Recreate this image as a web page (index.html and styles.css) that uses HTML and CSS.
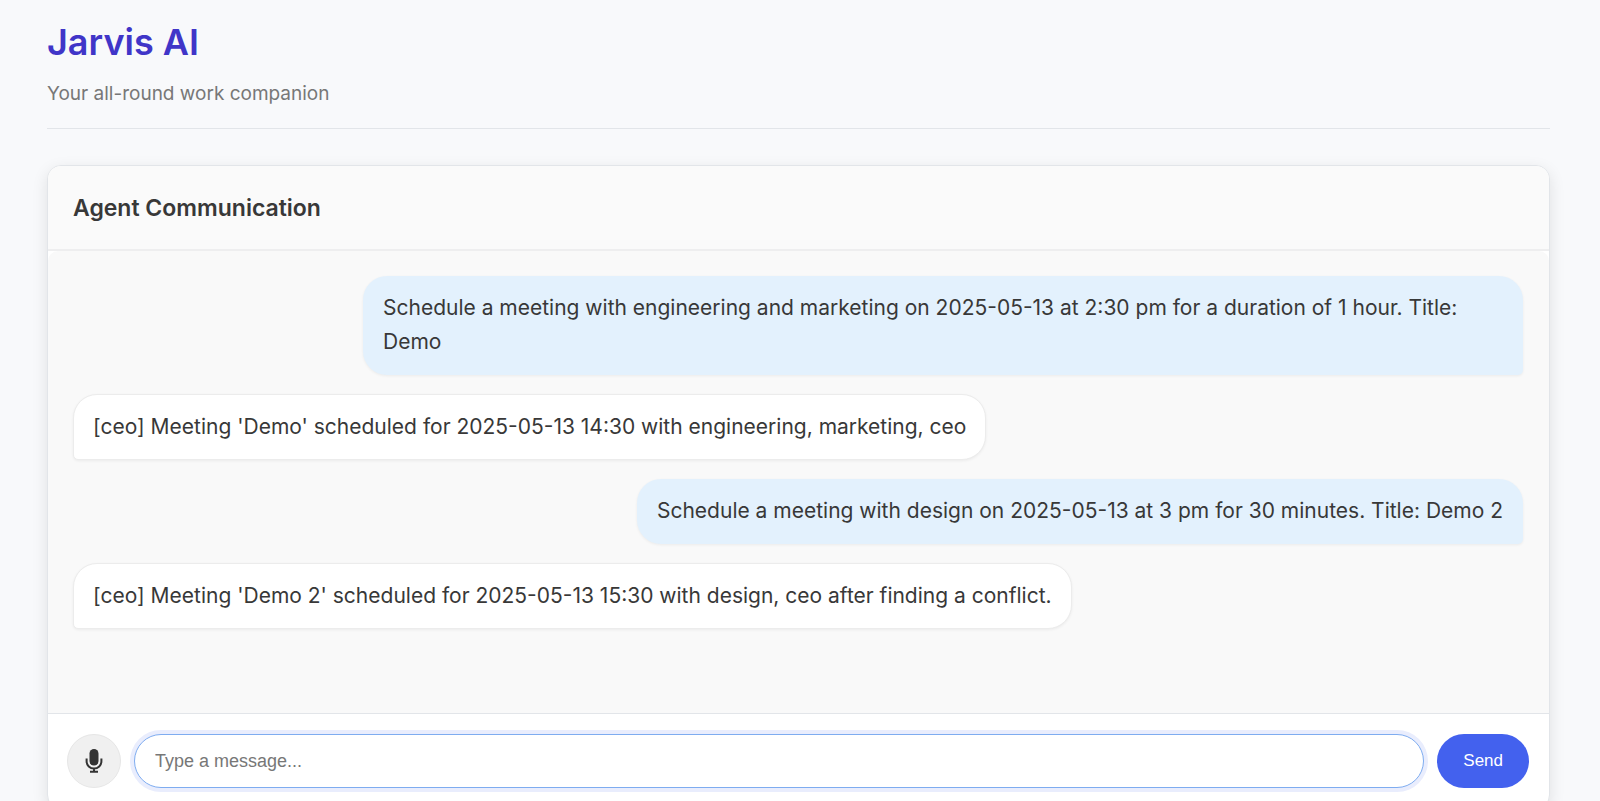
FILE: index.html
```html
<!DOCTYPE html>
<html lang="en">
<head>
<meta charset="utf-8">
<meta name="viewport" content="width=device-width, initial-scale=1">
<title>Jarvis AI</title>
<link rel="stylesheet" href="styles.css">
</head>
<body>
<div class="page">
  <header class="page-header">
    <h1 class="brand">Jarvis AI</h1>
    <p class="tagline">Your all-round work companion</p>
  </header>
  <main class="card">
    <div class="card-header">
      <h2 class="card-title">Agent Communication</h2>
    </div>
    <div class="messages">
      <div class="message message-user">Schedule a meeting with engineering and marketing on 2025-05-13 at 2:30 pm for a duration of 1 hour. Title: Demo</div>
      <div class="message message-agent">[ceo] Meeting 'Demo' scheduled for 2025-05-13 14:30 with engineering, marketing, ceo</div>
      <div class="message message-user">Schedule a meeting with design on 2025-05-13 at 3 pm for 30 minutes. Title: Demo 2</div>
      <div class="message message-agent">[ceo] Meeting 'Demo 2' scheduled for 2025-05-13 15:30 with design, ceo after finding a conflict.</div>
    </div>
    <form class="composer">
      <button class="mic" type="button" aria-label="Record voice message">
        <svg class="mic-icon" viewBox="0 0 24 24" aria-hidden="true">
          <rect x="7.5" y="0" width="9" height="16.5" rx="4.5" fill="currentColor"/>
          <path d="M4.6 9.5v2.7a7.4 7.4 0 0 0 14.8 0V9.5M12 19.6V23M8 22.8h8" fill="none" stroke="currentColor" stroke-width="2"/>
        </svg>
      </button>
      <input class="field" type="text" placeholder="Type a message..." aria-label="Message">
      <button class="send" type="submit">Send</button>
    </form>
  </main>
</div>
</body>
</html>
```

FILE: styles.css
```css
* {
  box-sizing: border-box;
}

body {
  margin: 0;
  background: #f8f9fb;
  color: #383838;
  font-family: Inter, "Liberation Sans", sans-serif;
  font-size: 21px;
  line-height: 34px;
}

.page {
  padding: 12px 50px 32px 47px;
}

.page-header {
  margin-bottom: 36px;
  padding-bottom: 17px;
  border-bottom: 1px solid #e2e5e9;
}

.brand {
  margin: 0;
  color: #4035c8;
  font-size: 36px;
  font-weight: 600;
  line-height: 60px;
}

.tagline {
  margin: 5px 0 0;
  color: #777;
  font-size: 19px;
}

.card {
  overflow: hidden;
  border: 1px solid #e2e5e9;
  border-radius: 14px;
  background: #fff;
  box-shadow: 0 5px 16px rgba(0, 0, 0, 0.1);
}

.card-header {
  padding: 25px 25px 24px;
  border-bottom: 2px solid #eeeeef;
  background: #fafafa;
}

.card-title {
  margin: 0;
  font-size: 23px;
  font-weight: 600;
}

.messages {
  display: flex;
  flex-direction: column;
  gap: 19px;
  min-height: 462px;
  padding: 25px 26px 25px 25px;
  border-radius: 10px 10px 0 0;
  background: #f9f9f9;
}

.message {
  max-width: 80%;
  border-radius: 24px;
  box-shadow: 0 1px 3px rgba(0, 0, 0, 0.06);
}

.message-user {
  align-self: flex-end;
  padding: 15px 20px 16px;
  border-bottom-right-radius: 5px;
  background: #e3f1fd;
}

.message-agent {
  align-self: flex-start;
  padding: 15px 19px;
  border: 1px solid #ececec;
  border-bottom-left-radius: 5px;
  background: #fff;
}

.composer {
  display: flex;
  align-items: center;
  gap: 13px;
  padding: 20px 20px 20px 19px;
  border-top: 1px solid #e2e5e9;
}

.mic,
.field,
.send {
  height: 54px;
  border-radius: 27px;
  font-family: "Liberation Sans", Arial, sans-serif;
  font-size: 18px;
}

.mic {
  display: flex;
  flex: none;
  align-items: center;
  justify-content: center;
  width: 54px;
  padding: 0;
  border: 1px solid #e6e6e6;
  background: #f0f0f0;
  color: #333;
}

.mic-icon {
  width: 24px;
  height: 24px;
}

.field {
  flex: 1;
  min-width: 0;
  padding: 0 20px;
  border: 1px solid #7eacf0;
  outline: none;
  background: #fff;
  box-shadow: 0 0 0 4px #e9edfd;
  color: #333;
}

.field::placeholder {
  color: #777;
}

.send {
  flex: none;
  padding: 0 26px;
  border: 0;
  background: #4361ee;
  color: #fff;
  font-size: 17px;
}
```
